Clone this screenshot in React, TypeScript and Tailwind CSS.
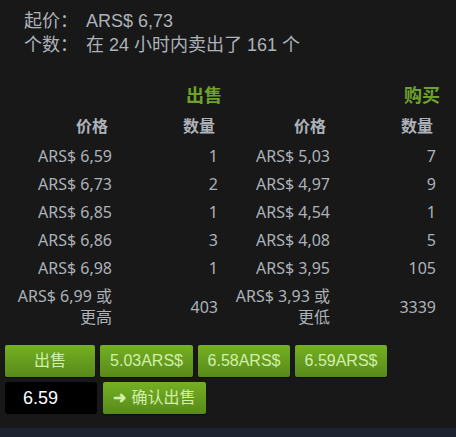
import React from "react";

type Row = { price: string; extra?: string; qty: string };

const sellRows: Row[] = [
  { price: "ARS$ 6,59", qty: "1" },
  { price: "ARS$ 6,73", qty: "2" },
  { price: "ARS$ 6,85", qty: "1" },
  { price: "ARS$ 6,86", qty: "3" },
  { price: "ARS$ 6,98", qty: "1" },
  { price: "ARS$ 6,99 或", extra: "更高", qty: "403" },
];

const buyRows: Row[] = [
  { price: "ARS$ 5,03", qty: "7" },
  { price: "ARS$ 4,97", qty: "9" },
  { price: "ARS$ 4,54", qty: "1" },
  { price: "ARS$ 4,08", qty: "5" },
  { price: "ARS$ 3,95", qty: "105" },
  { price: "ARS$ 3,93 或", extra: "更低", qty: "3339" },
];

const motiva = { fontFamily: '"Noto Sans", "Noto Sans CJK SC", sans-serif' };
const arial = { fontFamily: '"Liberation Sans", "Noto Sans CJK SC", sans-serif' };

function OrderTable({ title, rows }: { title: string; rows: Row[] }) {
  return (
    <div className="w-[210px]" style={motiva}>
      <div className="-mr-1 h-[22px] text-right text-[18px] font-bold leading-[22px] text-[#6ea22a]">
        {title}
      </div>
      <div className="mt-[6px] grid h-[28px] grid-cols-[104px_106px] items-center text-[16px] font-bold text-[#acb2b8]">
        <div className="pr-1 text-right">价格</div>
        <div className="pr-[3px] text-right">数量</div>
      </div>
      <div className="mt-[2px]">
        {rows.map((r, i) => (
          <div
            key={i}
            className={
              "grid grid-cols-[104px_106px] items-center whitespace-nowrap text-[16px] text-[#acb2b8] " +
              (r.extra ? "h-[50px] leading-[21px]" : "h-[28px]")
            }
          >
            <div className="text-right">
              {r.price}
              {r.extra && (
                <>
                  <br />
                  {r.extra}
                </>
              )}
            </div>
            <div className="text-right">{r.qty}</div>
          </div>
        ))}
      </div>
    </div>
  );
}

function GreenBtn({ children, w }: { children: React.ReactNode; w: string }) {
  return (
    <button
      className={
        "flex h-[32px] items-center justify-center rounded-[2px] bg-gradient-to-b from-[#75b022] to-[#588a1b] text-[16px] text-[#d2efa9] shadow-[0_1px_1px_rgba(0,0,0,0.5)] " +
        w
      }
      style={arial}
    >
      {children}
    </button>
  );
}

export default function App() {
  return (
    <div className="flex h-[437px] w-[456px] flex-col bg-[#181818]">
      <div className="flex-1">
        <div className="pl-6 pt-[9px] text-[18px] leading-6 text-[#acb2b8]" style={arial}>
          <div>
            <span className="inline-block w-[62px]">起价：</span>ARS$ 6,73
          </div>
          <div>
            <span className="inline-block w-[62px]">个数：</span>在 24 小时内卖出了 161 个
          </div>
        </div>

        <div className="mt-[27px] flex gap-2 pl-2">
          <OrderTable title="出售" rows={sellRows} />
          <OrderTable title="购买" rows={buyRows} />
        </div>

        <div className="mt-[13px] flex gap-[5px] pl-[5px]">
          <GreenBtn w="w-[90px]">出售</GreenBtn>
          <GreenBtn w="w-[93px]">5.03ARS$</GreenBtn>
          <GreenBtn w="w-[92px]">6.58ARS$</GreenBtn>
          <GreenBtn w="w-[92px]">6.59ARS$</GreenBtn>
        </div>

        <div className="mt-[5px] flex gap-[6px] pl-[5px]">
          <div
            className="flex h-[32px] w-[92px] items-center rounded-[3px] bg-black pl-[18px] text-[18px] text-white"
            style={arial}
          >
            6.59
          </div>
          <GreenBtn w="w-[103px]">
            <span className="mr-[5px] font-bold">➜</span>确认出售
          </GreenBtn>
        </div>
      </div>
      <div className="h-[9px] bg-[#1d2230]" />
    </div>
  );
}
